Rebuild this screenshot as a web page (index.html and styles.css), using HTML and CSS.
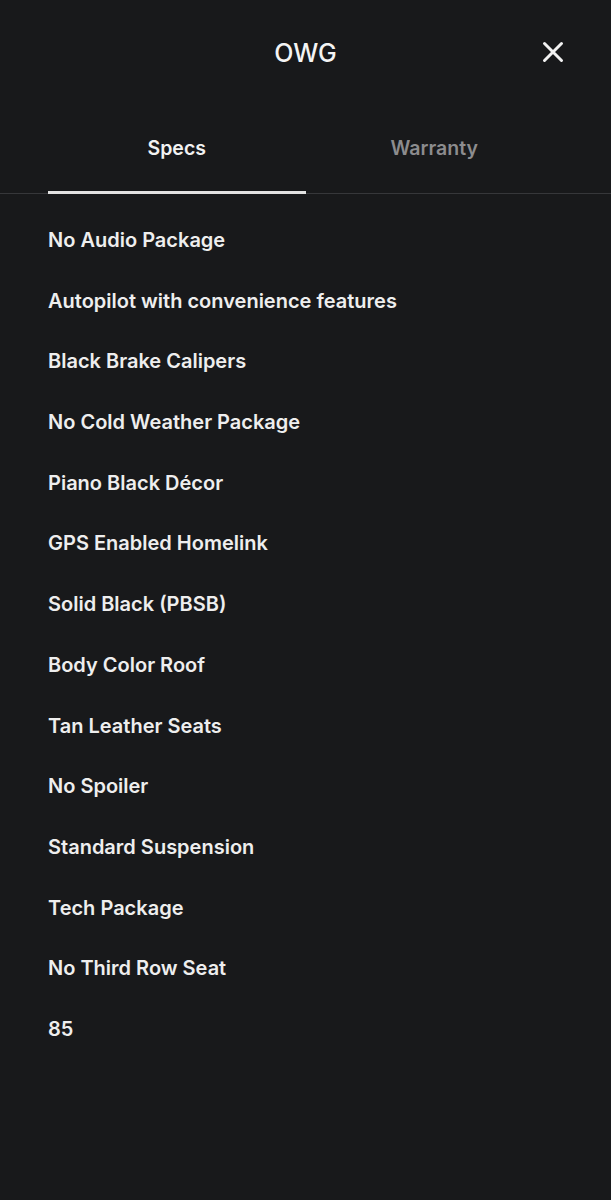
FILE: index.html
```html
<!DOCTYPE html>
<html>
<head>
<meta charset="utf-8">
<link rel="stylesheet" href="styles.css">
</head>
<body>
<div class="panel">
  <header class="head">
    <h1 class="title">OWG</h1>
    <button class="close" aria-label="Close">
      <svg width="22" height="22" viewBox="0 0 22 22"><path d="M2.5 2.5L19.5 19.5M19.5 2.5L2.5 19.5" stroke="#f2f2f2" stroke-width="3" stroke-linecap="round"/></svg>
    </button>
  </header>
  <nav class="tabs">
    <div class="tab active">Specs</div>
    <div class="tab">Warranty</div>
  </nav>
  <ul class="specs">
    <li>No Audio Package</li>
    <li>Autopilot with convenience features</li>
    <li>Black Brake Calipers</li>
    <li>No Cold Weather Package</li>
    <li>Piano Black Décor</li>
    <li>GPS Enabled Homelink</li>
    <li>Solid Black (PBSB)</li>
    <li>Body Color Roof</li>
    <li>Tan Leather Seats</li>
    <li>No Spoiler</li>
    <li>Standard Suspension</li>
    <li>Tech Package</li>
    <li>No Third Row Seat</li>
    <li>85</li>
  </ul>
</div>
</body>
</html>
```
FILE: styles.css
```css
html, body {
  margin: 0;
  padding: 0;
  background: #18191b;
}
body {
  font-family: Inter, "Noto Sans", sans-serif;
  color: #eeeeee;
  width: 611px;
  height: 1200px;
}
.head {
  position: relative;
  height: 106px;
  display: flex;
  align-items: center;
  justify-content: center;
}
.title {
  margin: 0;
  font-size: 25px;
  font-weight: 500;
  color: #f4f4f4;
}
.close {
  position: absolute;
  right: 47px;
  top: 41px;
  background: none;
  border: 0;
  padding: 0;
  width: 22px;
  height: 22px;
}
.close svg { display: block; }
.tabs {
  display: flex;
  padding: 0 48px;
  border-bottom: 1px solid #36373a;
  height: 87px;
}
.tab {
  flex: 1;
  text-align: center;
  font-size: 19.5px;
  font-weight: 600;
  color: #8c8c8e;
  padding-top: 30px;
  box-sizing: border-box;
}
.tab.active {
  color: #f2f2f2;
  border-bottom: 3px solid #e2e2e2;
  margin-bottom: -1px;
}
.specs {
  list-style: none;
  margin: 0;
  padding: 34px 48px 0;
  display: flex;
  flex-direction: column;
  gap: 36.7px;
}
.specs li {
  font-size: 20px;
  font-weight: 600;
  line-height: 24px;
  color: #eeeeee;
}
```
